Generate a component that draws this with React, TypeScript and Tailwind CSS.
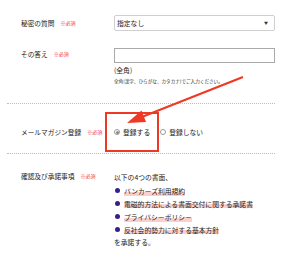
const font = { fontFamily: '"Noto Sans CJK JP", "Noto Sans", sans-serif' }

function Required() {
  return <span className="ml-[6px] text-[5px] leading-[8px] text-[#f0393f]">※必須</span>
}

function Label({ text }: { text: string }) {
  return (
    <div className="flex w-[107px] shrink-0 items-center pl-[14px] text-[6.7px] leading-[10px] text-[#222]">
      <span>{text}</span>
      <Required />
    </div>
  )
}

function Radio({ checked }: { checked?: boolean }) {
  return (
    <span className="flex h-[6px] w-[6px] items-center justify-center rounded-full border border-[#9a9a9a] bg-white">
      {checked && <span className="h-[3px] w-[3px] rounded-full bg-[#8a8a8a]" />}
    </span>
  )
}

const docs = [
  'バンカーズ利用規約',
  '電磁的方法による書面交付に関する承諾書',
  'プライバシーポリシー',
  '反社会的勢力に対する基本方針',
]

export default function App() {
  return (
    <div className="relative h-[266px] w-[300px] overflow-hidden bg-white" style={font}>
      <div className="pl-[7px] pr-[25px]">
        <section className="pb-[18px] pt-[15px]">
          <div className="flex">
            <Label text="秘密の質問" />
            <div className="flex h-[16px] flex-1 items-center justify-between rounded-[2px] border border-[#cfcfcf] pl-[2px] pr-[6px] text-[6.8px] text-[#222]">
              <span>指定なし</span>
              <span className="text-[4px] text-[#333]">▼</span>
            </div>
          </div>
          <div className="mt-[17px] flex">
            <div className="pt-[1px]">
              <Label text="その答え" />
            </div>
            <div className="flex-1">
              <div className="h-[15px] border border-[#a9a9a9] bg-white" />
              <p className="mt-[2px] text-[6.8px] leading-[10px] text-[#222]">(全角)</p>
              <p className="mt-[3px] text-[4.6px] leading-[7px] text-[#333]">
                全角(漢字、ひらがな、カタカナ)でご入力ください。
              </p>
            </div>
          </div>
        </section>

        <div className="border-t border-dotted border-[#bdbdbd]" />

        <section className="flex pb-[16px] pt-[23px]">
          <Label text="メールマガジン登録" />
          <div className="flex items-center text-[6.8px] leading-[10px] text-[#222]">
            <span className="flex items-center gap-[3px]">
              <Radio checked />
              登録する
            </span>
            <span className="ml-[10px] flex items-center gap-[3px]">
              <Radio />
              登録しない
            </span>
          </div>
        </section>

        <div className="border-t border-dotted border-[#bdbdbd]" />

        <section className="flex pt-[17px]">
          <div className="self-start">
            <Label text="確認及び承諾事項" />
          </div>
          <div className="text-[6.8px] leading-[13px] text-[#222]">
            <p>以下の4つの書面、</p>
            {docs.map((d) => (
              <div key={d} className="flex h-[13px] items-center">
                <span className="ml-[1px] mr-[4px] h-[5px] w-[5px] rounded-full bg-[#3a1d8a]" />
                <span className="bg-[linear-gradient(transparent_55%,#fbd0cb_55%,#fbd0cb_95%,transparent_95%)] leading-[10px]">
                  {d}
                </span>
              </div>
            ))}
            <p>を承諾する。</p>
          </div>
        </section>
      </div>

      <div className="absolute left-[105px] top-[112px] h-[40px] w-[54px] border-2 border-[#ee3a24]" />
      <svg className="absolute left-0 top-0" width="300" height="266" viewBox="0 0 300 266">
        <line x1="243" y1="77" x2="143" y2="116.5" stroke="#ee3a24" strokeWidth="2.2" />
        <polygon points="127,123 146,122 141.5,110.5" fill="#ee3a24" />
      </svg>
    </div>
  )
}
